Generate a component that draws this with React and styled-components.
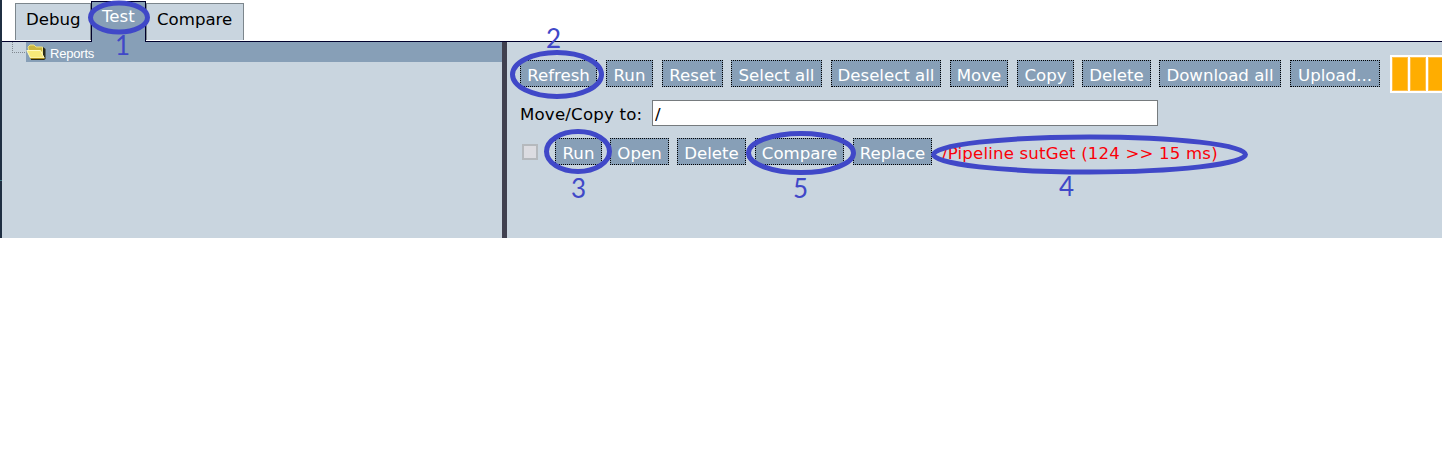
import React from 'react';
import styled, { createGlobalStyle } from 'styled-components';

const GlobalStyle = createGlobalStyle`
  *, *::before, *::after { box-sizing: border-box; }
  body {
    margin: 0;
    background: #fff;
    overflow: hidden;
    font: 16.6px/20px "DejaVu Sans", sans-serif;
    color: #000;
  }
`;

const Frame = styled.div`
  position: relative;
  display: flex;
  width: 1442px;
  height: 238px;
  overflow: hidden;
`;

const DesktopEdge = styled.div`
  flex: none;
  width: 2px;
  background: linear-gradient(#1f2f42 0 180px, #3f7a86 180px 181px, #1f2f42 181px);
`;

const Window = styled.div`
  flex: 1;
  min-width: 0;
  display: flex;
  flex-direction: column;
`;

const TabBar = styled.div`
  flex: none;
  display: flex;
  height: 42px;
  padding-left: 13px;
  border-bottom: 1px solid #00002c;
  background: #fff;
`;

const Tab = styled.div`
  flex: none;
  width: ${(p) => p.$width}px;
  height: 37px;
  margin-top: 3px;
  padding: 6px 0 0 10px;
  border: 1px solid #7c868c;
  border-bottom: 0;
  background: #c9d5df;
  white-space: nowrap;
`;

const ActiveTab = styled(Tab)`
  height: 41px;
  margin-top: 1px;
  padding-top: 5px;
  border-color: #00002c;
  background: #879fb7;
  color: #fff;
`;

const Body = styled.div`
  flex: 1;
  display: flex;
  min-height: 0;
  background: #c9d5df;
`;

const TreePane = styled.div`
  flex: none;
  width: 500px;
`;

const TreeNode = styled.div`
  display: flex;
  height: 20px;
  padding-left: 10px;
`;

const TreeLines = styled.svg`
  flex: none;
  width: 14px;
  height: 20px;
`;

const NodeLabel = styled.div`
  flex: 1;
  display: flex;
  align-items: center;
  background: #879fb7;
  color: #fff;
  font: 13px/20px "Liberation Sans", Arial, sans-serif;
  letter-spacing: -0.2px;

  svg { flex: none; margin-right: 3px; }
  span { padding-top: 3px; }
`;

const Splitter = styled.div`
  flex: none;
  width: 5px;
  background: #40404f;
`;

const ReportPane = styled.div`
  flex: 1;
  min-width: 0;
  padding: 13px 0 0 13px;
  overflow: hidden;
`;

const Toolbar = styled.div`
  display: flex;
  align-items: flex-start;
  height: 38px;
`;

const ButtonGroup = styled.div`
  display: flex;
  flex: none;
  padding-top: ${(p) => p.$top || 0}px;
`;

const Button = styled.div`
  flex: none;
  width: ${(p) => p.$width}px;
  height: 27px;
  margin-right: ${(p) => p.$gap}px;
  padding-top: 5px;
  border: 1px dotted #000;
  background: #879fb7;
  color: #fff;
  line-height: 20px;
  text-align: center;
  white-space: nowrap;
`;

const Progress = styled.div`
  flex: none;
  display: flex;
  gap: 2px;
  width: 80px;
  height: 38px;
  margin-left: 1px;
  padding: 2px;
  background: #fff;
`;

const ProgressCell = styled.div`
  flex: none;
  width: 16px;
  border: 1px solid #ffc04a;
  background: #ffad00;
`;

const PathRow = styled.div`
  display: flex;
  align-items: center;
  height: 26px;
  margin-top: 7px;
`;

const PathLabel = styled.label`
  width: 132px;
  padding-top: 4px;
  white-space: nowrap;
  letter-spacing: 0.2px;
`;

const PathInput = styled.input`
  width: 506px;
  height: 26px;
  padding: 3px 2px 0;
  border: 1px solid #767b7e;
  border-radius: 0;
  outline: 0;
  background: #fff;
  font: inherit;
`;

const ReportRow = styled.div`
  display: flex;
  align-items: center;
  height: 27px;
  margin-top: 12px;
`;

const Checkbox = styled.div`
  width: 16px;
  height: 16px;
  margin: 0 17px 0 2px;
  border: 2px solid #b5b9bd;
  background: #dcdce1;
`;

const ReportName = styled.div`
  padding-top: 5px;
  color: #fa0008;
  white-space: nowrap;
  letter-spacing: 0.17px;
`;

const Annotations = styled.svg`
  position: absolute;
  inset: 0;
  pointer-events: none;

  ellipse { fill: none; stroke: #4048c8; stroke-width: 5; }
  text { fill: #4048c8; font: 26px Lato, sans-serif; text-anchor: middle; }
`;

const FolderIcon = () => (
  <svg width="21" height="20" viewBox="0 0 21 20">
    <path d="M4 5 H17 L19.5 7 V17 L18 18 H5Z" fill="#292a18" />
    <path d="M2 5 L4 3 H8 L10 5 H16.5 V13 H4Z" fill="#cbb63f" stroke="#efe382" />
    <path d="M0.8 8.5 H14.5 L18.2 16 H4.5Z" fill="#f7e979" stroke="#fffac0" />
    <path d="M4.5 16.5 H18.5" stroke="#a98c20" />
  </svg>
);

const actions = [
  ['Refresh', 77, 9], ['Run', 47, 9], ['Reset', 61, 8], ['Select all', 91, 9],
  ['Deselect all', 110, 9], ['Move', 58, 9], ['Copy', 57, 8], ['Delete', 69, 8],
  ['Download all', 122, 9], ['Upload...', 90, 9],
];

const reportActions = [
  ['Run', 47, 8], ['Open', 59, 8], ['Delete', 69, 9], ['Compare', 89, 9], ['Replace', 79, 10],
];

const marks = [
  { n: 1, cx: 119, cy: 17.5, rx: 28.5, ry: 14.5, x: 122.5, y: 55 },
  { n: 2, cx: 557, cy: 74.5, rx: 44.5, ry: 22, x: 553.5, y: 48 },
  { n: 3, cx: 578, cy: 151.5, rx: 31.5, ry: 20, x: 578.5, y: 198 },
  { n: 4, cx: 1089.5, cy: 154.5, rx: 156, ry: 17.5, x: 1066.5, y: 196 },
  { n: 5, cx: 801, cy: 153, rx: 52.5, ry: 19.5, x: 800.5, y: 198 },
];

const Buttons = ({ items, top }) => (
  <ButtonGroup $top={top}>
    {items.map(([label, width, gap]) => (
      <Button key={label} $width={width} $gap={gap}>{label}</Button>
    ))}
  </ButtonGroup>
);

export default function App() {
  return (
    <>
      <GlobalStyle />
      <Frame>
        <DesktopEdge />
        <Window>
          <TabBar>
            <Tab $width={76}>Debug</Tab>
            <ActiveTab $width={55}>Test</ActiveTab>
            <Tab $width={98}>Compare</Tab>
          </TabBar>
          <Body>
            <TreePane>
              <TreeNode>
                <TreeLines>
                  <path d="M0.5 0 V11 M0 10.5 H14" fill="none" stroke="#808890" strokeDasharray="1 1" />
                </TreeLines>
                <NodeLabel><FolderIcon /><span>Reports</span></NodeLabel>
              </TreeNode>
            </TreePane>
            <Splitter />
            <ReportPane>
              <Toolbar>
                <Buttons items={actions} top={5} />
                <Progress>
                  {[0, 1, 2, 3].map((i) => <ProgressCell key={i} />)}
                </Progress>
              </Toolbar>
              <PathRow>
                <PathLabel htmlFor="target">Move/Copy to:</PathLabel>
                <PathInput id="target" defaultValue="/" />
              </PathRow>
              <ReportRow>
                <Checkbox />
                <Buttons items={reportActions} />
                <ReportName>/Pipeline sutGet (124 &gt;&gt; 15 ms)</ReportName>
              </ReportRow>
            </ReportPane>
          </Body>
        </Window>
        <Annotations width="1442" height="238">
          {marks.map((m) => (
            <g key={m.n}>
              <ellipse cx={m.cx} cy={m.cy} rx={m.rx} ry={m.ry} />
              <text x={m.x} y={m.y}>{m.n}</text>
            </g>
          ))}
        </Annotations>
      </Frame>
    </>
  );
}
